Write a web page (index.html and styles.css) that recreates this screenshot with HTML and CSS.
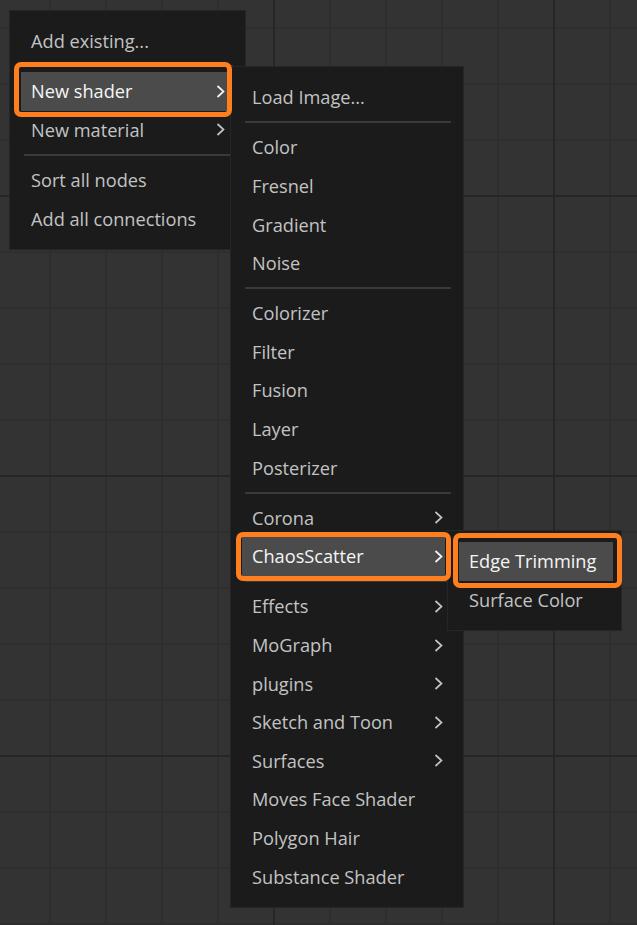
FILE: index.html
```html
<!DOCTYPE html>
<html lang="en">
<head>
    <meta charset="UTF-8">
    <meta name="viewport" content="width=device-width, initial-scale=1.0">
    <title>Node Editor - Context Menu</title>
    <link rel="stylesheet" href="styles.css">
</head>
<body>
    <div class="canvas">
        <!-- root context menu -->
        <div class="menu menu-main">
            <div class="item">Add existing...</div>
            <div class="sep"></div>
            <div class="item active marked">
                <span>New shader</span>
                <svg class="arrow" viewBox="0 0 9 13"><polyline points="1.5,1 7.5,6.5 1.5,12"/></svg>
            </div>
            <div class="item">
                <span>New material</span>
                <svg class="arrow" viewBox="0 0 9 13"><polyline points="1.5,1 7.5,6.5 1.5,12"/></svg>
            </div>
            <div class="sep"></div>
            <div class="item">Sort all nodes</div>
            <div class="item">Add all connections</div>
        </div>

        <!-- New shader submenu -->
        <div class="menu menu-shader">
            <div class="item">Load Image...</div>
            <div class="sep"></div>
            <div class="item">Color</div>
            <div class="item">Fresnel</div>
            <div class="item">Gradient</div>
            <div class="item">Noise</div>
            <div class="sep"></div>
            <div class="item">Colorizer</div>
            <div class="item">Filter</div>
            <div class="item">Fusion</div>
            <div class="item">Layer</div>
            <div class="item">Posterizer</div>
            <div class="sep"></div>
            <div class="item">
                <span>Corona</span>
                <svg class="arrow" viewBox="0 0 9 13"><polyline points="1.5,1 7.5,6.5 1.5,12"/></svg>
            </div>
            <div class="item active marked">
                <span>ChaosScatter</span>
                <svg class="arrow" viewBox="0 0 9 13"><polyline points="1.5,1 7.5,6.5 1.5,12"/></svg>
            </div>
            <div class="sep"></div>
            <div class="item">
                <span>Effects</span>
                <svg class="arrow" viewBox="0 0 9 13"><polyline points="1.5,1 7.5,6.5 1.5,12"/></svg>
            </div>
            <div class="item">
                <span>MoGraph</span>
                <svg class="arrow" viewBox="0 0 9 13"><polyline points="1.5,1 7.5,6.5 1.5,12"/></svg>
            </div>
            <div class="item">
                <span>plugins</span>
                <svg class="arrow" viewBox="0 0 9 13"><polyline points="1.5,1 7.5,6.5 1.5,12"/></svg>
            </div>
            <div class="item">
                <span>Sketch and Toon</span>
                <svg class="arrow" viewBox="0 0 9 13"><polyline points="1.5,1 7.5,6.5 1.5,12"/></svg>
            </div>
            <div class="item">
                <span>Surfaces</span>
                <svg class="arrow" viewBox="0 0 9 13"><polyline points="1.5,1 7.5,6.5 1.5,12"/></svg>
            </div>
            <div class="item">Moves Face Shader</div>
            <div class="item">Polygon Hair</div>
            <div class="item">Substance Shader</div>
        </div>

        <!-- ChaosScatter submenu -->
        <div class="menu menu-scatter">
            <div class="item active marked">Edge Trimming</div>
            <div class="item">Surface Color</div>
        </div>
    </div>
</body>
</html>
```

FILE: styles.css
```css
* {
    margin: 0;
    padding: 0;
    box-sizing: border-box;
}

body {
    font-family: "Open Sans", "Noto Sans", sans-serif;
    font-size: 18.2px;
    background-color: #333333;
    /* node editor grid: major lines every 280px, minor every 56px */
    background-image:
        linear-gradient(90deg, #262626 2px, transparent 2px),
        linear-gradient(#262626 2px, transparent 2px),
        linear-gradient(90deg, #2e2e2e 2px, transparent 2px),
        linear-gradient(#2e2e2e 2px, transparent 2px);
    background-size: 280px 100%, 100% 280px, 56px 100%, 100% 56px;
    background-position: 273px 0, 0 195px, 49px 0, 0 27px;
    overflow: hidden;
}

.canvas {
    position: relative;
    width: 637px;
    height: 925px;
}

.menu {
    position: absolute;
    background: #1b1b1b;
    border: 1px solid #262626;
    padding: 11px 0;
}

.menu-main {
    left: 9px;
    top: 10px;
    width: 237px;
}

.menu-shader {
    left: 230px;
    top: 66px;
    width: 234px;
}

.menu-scatter {
    left: 447px;
    top: 530px;
    width: 175px;
}

.item {
    position: relative;
    display: flex;
    align-items: center;
    justify-content: space-between;
    height: 38.6px;
    margin: 0 18px 0 11px;
    padding: 0 2px 0 10px;
    color: #c3c3c3;
    white-space: nowrap;
}

.menu-scatter .item {
    margin-right: 8px;
}

.item.active {
    background: #4b4b4b;
    color: #f5f5f5;
}

.arrow {
    width: 9px;
    height: 13px;
    fill: none;
    stroke: currentColor;
    stroke-width: 1.7;
}

.sep {
    height: 2px;
    margin: 4.75px 12px 4.75px 14px;
    background: #3a3a3a;
}

/* orange highlight frame */
.marked::after {
    content: "";
    position: absolute;
    top: -5px;
    right: -6px;
    bottom: -5px;
    left: -6px;
    border: 5px solid #ff7f1e;
    border-radius: 7px;
    z-index: 10;
}

.menu-main .marked::after {
    top: -10px;
    right: -5px;
    bottom: -6px;
    left: -7px;
}

.menu-scatter .marked::after {
    top: -9px;
    right: -9px;
    bottom: -7px;
    left: -6px;
}
```
